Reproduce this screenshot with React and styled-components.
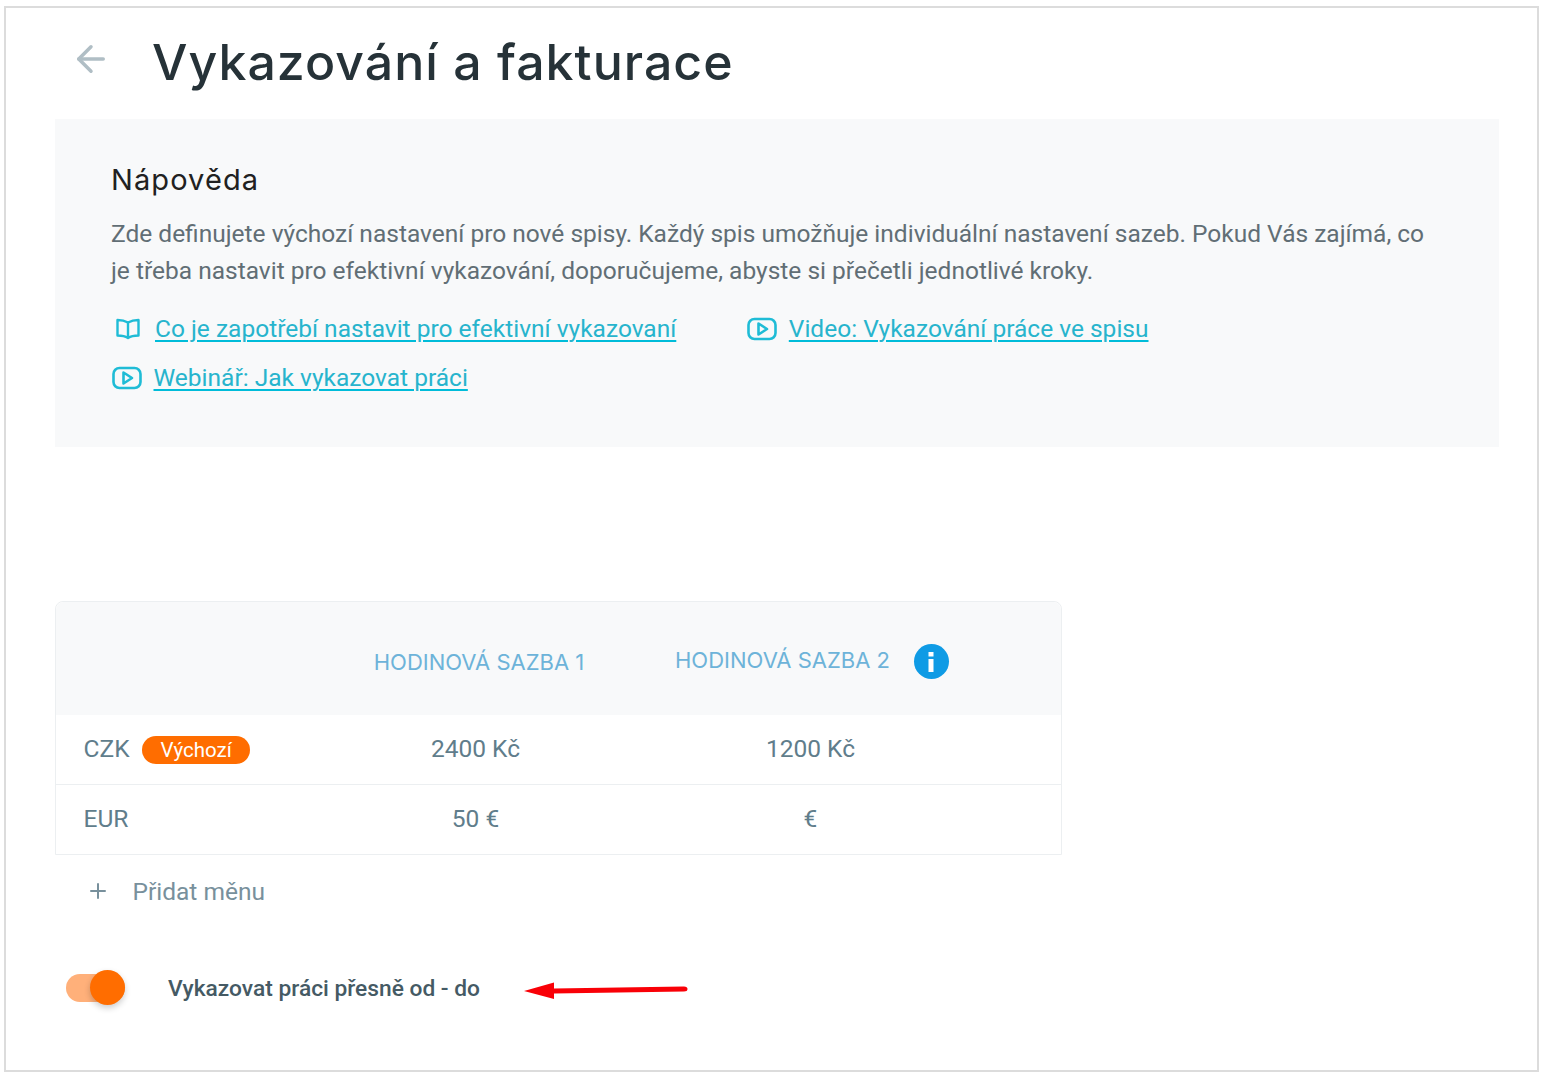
import React from 'react';
import styled, { createGlobalStyle } from 'styled-components';
import { ArrowLeft, Plus } from 'lucide-react';

const GlobalStyle = createGlobalStyle`
  html, body { margin: 0; padding: 0; background: #fff; }
  body { font-family: Roboto, "Liberation Sans", sans-serif; }
  * { box-sizing: border-box; }
`;

const HEADING_FONT = `Inter, "Noto Sans", sans-serif`;

const Frame = styled.div`
  width: 1535px;
  height: 1066px;
  margin: 6px 0 0 4px;
  border: 2px solid #dcdcdc;
  padding: 0 38px 0 49px;
`;

const TitleRow = styled.header`
  display: flex;
  align-items: center;
  height: 111px;
  padding: 0 0 4px 15px;
`;

const BackIcon = styled(ArrowLeft)`
  width: 42px;
  height: 42px;
  color: #b0bec5;
  margin-right: 40px;
  margin-bottom: 6px;
  flex: none;
`;

const Title = styled.h1`
  margin: 0;
  font-family: ${HEADING_FONT};
  font-weight: 500;
  font-size: 50px;
  letter-spacing: 1.03px;
  line-height: 60px;
  color: #263238;
`;

const HelpPanel = styled.section`
  height: 328px;
  background: #f8f9fa;
  padding: 43px 56px 0;
`;

const HelpTitle = styled.h2`
  margin: 0 0 17px;
  font-family: ${HEADING_FONT};
  font-weight: 400;
  font-size: 29px;
  letter-spacing: 1.1px;
  line-height: 36px;
  color: #212121;
`;

const HelpText = styled.p`
  margin: 0 0 15px;
  font-size: 24.5px;
  line-height: 37px;
  color: #616e75;
`;

const LinkRow = styled.div`
  display: flex;
  align-items: center;
  height: 49px;
`;

const HelpLink = styled.a`
  display: flex;
  align-items: center;
  gap: ${({ $gap }) => $gap}px;
  margin-left: ${({ $inset }) => $inset || 0}px;
  margin-right: ${({ $after }) => $after || 0}px;
  font-size: 24.5px;
  color: #27b4cd;
  span {
    text-decoration: underline;
    text-decoration-color: #00bcd9;
    text-decoration-thickness: 2px;
    text-underline-offset: 3px;
  }
  svg { flex: none; color: #1fbcd6; }
`;

const BookIcon = () => (
  <svg width="26" height="24" viewBox="0 0 24 24" fill="none" stroke="currentColor" strokeWidth="2.4" strokeLinejoin="round">
    <path d="M12 5.500 C9 3.800 5 3 1.500 3 V18.500 C5 18.500 9 19 12 21 C15 19 19 18.500 22.500 18.500 V3 C19 3 15 3.800 12 5.500 Z" />
    <path d="M12 5.500 V21" />
  </svg>
);

const PlayIcon = () => (
  <svg width="30" height="24" viewBox="0 0 30 24" fill="none" stroke="currentColor" strokeWidth="2.6" strokeLinejoin="round">
    <rect x="1.500" y="2" width="27" height="20" rx="6" />
    <path d="M11.500 6.500 L20 12 L11.500 17.500 Z" />
  </svg>
);

const RatesCard = styled.section`
  width: 1007px;
  margin-top: 154px;
  border: 1px solid #eceff1;
  border-radius: 8px 8px 0 0;
`;

const RateGrid = styled.div`
  display: grid;
  grid-template-columns: 252px 335px 335px 1fr;
  align-items: center;
`;

const HeaderRow = styled(RateGrid)`
  height: 113px;
  padding-top: 6px;
  background: #f8f9fa;
  border-radius: 8px 8px 0 0;
`;

const BodyRow = styled(RateGrid)`
  height: ${({ $first }) => ($first ? 69 : 70)}px;
  padding-bottom: 2px;
  border-top: ${({ $first }) => ($first ? 'none' : '1px solid #eceff1')};
`;

const HeaderCell = styled.div`
  display: flex;
  align-items: center;
  justify-content: center;
  gap: 24px;
  padding-left: ${({ $shift }) => $shift || 0}px;
  font-family: ${HEADING_FONT};
  font-size: 22px;
  color: #6db3d9;
`;

const HeaderLabel = styled.span`
  margin-bottom: ${({ $lift }) => $lift || 0}px;
`;

const InfoBadge = styled.span`
  width: 35px;
  height: 35px;
  border-radius: 50%;
  background: #0f9be5;
  display: flex;
  align-items: center;
  justify-content: center;
  flex: none;
`;

const CurrencyCell = styled.div`
  display: flex;
  align-items: center;
  gap: 12.5px;
  padding-left: 27.5px;
  font-size: 24.5px;
  color: #607d8b;
`;

const DefaultBadge = styled.span`
  height: 28px;
  padding: 0 18.5px;
  margin-top: 2px;
  border-radius: 14px;
  background: #ff6d00;
  color: #fff;
  font-size: 20.5px;
  line-height: 28px;
`;

const ValueCell = styled.div`
  text-align: center;
  font-size: 24.5px;
  color: #607d8b;
`;

const AddRow = styled.div`
  display: flex;
  align-items: center;
  gap: 22.5px;
  height: 72px;
  padding-left: 31px;
  font-size: 24.5px;
  color: #78909c;
`;

const OptionRow = styled.div`
  display: flex;
  align-items: center;
  margin-top: 37px;
  height: 48px;
  padding-left: 11px;
`;

const Toggle = styled.div`
  position: relative;
  width: 59px;
  height: 28px;
  margin-right: 43px;
  flex: none;
  background: #ffb07a;
  border-radius: 14px;
  &::after {
    content: '';
    position: absolute;
    right: 0;
    top: -4px;
    width: 35px;
    height: 35px;
    border-radius: 50%;
    background: #ff6d00;
    box-shadow: 0 3px 6px rgba(0, 0, 0, 0.2);
  }
`;

const OptionLabel = styled.span`
  font-size: 22.75px;
  font-weight: 500;
  color: #455a64;
  margin-right: 44px;
`;

const ArrowSvg = styled.svg`
  flex: none;
  margin-top: 3px;
`;

const RedArrow = () => (
  <ArrowSvg width="164" height="20" viewBox="0 0 164 20">
    <path d="M0 11 L30 2.500 L30 8.500 L160 6.500 Q163.500 6.500 163.500 9 Q163.500 11.500 160 11.500 L30 13.500 L30 19 Z" fill="#f90007" />
  </ArrowSvg>
);

const App = () => (
  <>
    <GlobalStyle />
    <Frame>
      <TitleRow>
        <BackIcon strokeWidth={2} />
        <Title>Vykazování a fakturace</Title>
      </TitleRow>

      <HelpPanel>
        <HelpTitle>Nápověda</HelpTitle>
        <HelpText>
          Zde definujete výchozí nastavení pro nové spisy. Každý spis umožňuje individuální nastavení sazeb. Pokud Vás zajímá, co je třeba nastavit pro efektivní vykazování, doporučujeme, abyste si přečetli jednotlivé kroky.
        </HelpText>
        <LinkRow>
          <HelpLink $gap={14} $inset={4} $after={70.5}>
            <BookIcon />
            <span>Co je zapotřebí nastavit pro efektivní vykazovaní</span>
          </HelpLink>
          <HelpLink $gap={12}>
            <PlayIcon />
            <span>Video: Vykazování práce ve spisu</span>
          </HelpLink>
        </LinkRow>
        <LinkRow>
          <HelpLink $gap={12} $inset={0.5}>
            <PlayIcon />
            <span>Webinář: Jak vykazovat práci</span>
          </HelpLink>
        </LinkRow>
      </HelpPanel>

      <RatesCard>
        <HeaderRow>
          <div />
          <HeaderCell $shift={7}><HeaderLabel>HODINOVÁ SAZBA 1</HeaderLabel></HeaderCell>
          <HeaderCell $shift={3}>
            <HeaderLabel $lift={4}>HODINOVÁ SAZBA 2</HeaderLabel>
            <InfoBadge>
              <svg width="8" height="20" viewBox="0 0 8 20" fill="#fff">
                <rect x="1.500" y="0" width="5" height="4.500" />
                <rect x="1.500" y="7" width="5" height="13" />
              </svg>
            </InfoBadge>
          </HeaderCell>
          <div />
        </HeaderRow>
        <BodyRow $first>
          <CurrencyCell>CZK <DefaultBadge>Výchozí</DefaultBadge></CurrencyCell>
          <ValueCell>2400 Kč</ValueCell>
          <ValueCell>1200 Kč</ValueCell>
          <div />
        </BodyRow>
        <BodyRow>
          <CurrencyCell>EUR</CurrencyCell>
          <ValueCell>50 €</ValueCell>
          <ValueCell>€</ValueCell>
          <div />
        </BodyRow>
      </RatesCard>

      <AddRow>
        <Plus size={24} strokeWidth={2} />
        Přidat měnu
      </AddRow>

      <OptionRow>
        <Toggle />
        <OptionLabel>Vykazovat práci přesně od - do</OptionLabel>
        <RedArrow />
      </OptionRow>
    </Frame>
  </>
);

export default App;
